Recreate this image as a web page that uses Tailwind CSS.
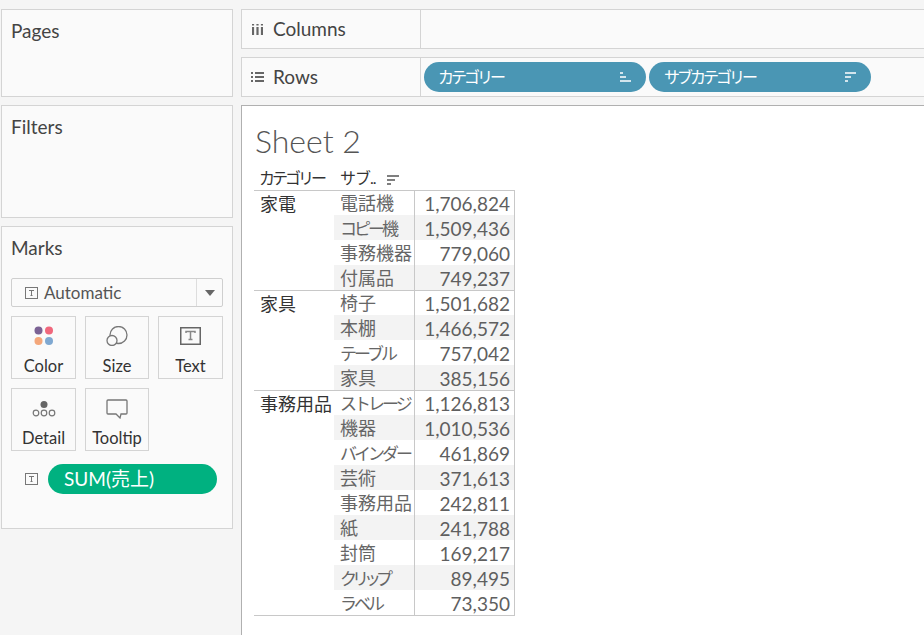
<!DOCTYPE html>
<html lang="en">
<head>
    <meta charset="UTF-8">
    <title>Sheet 2</title>
    <script src="https://cdn.jsdelivr.net/npm/@tailwindcss/browser@4"></script>
</head>
<body class="w-[924px] h-[635px] overflow-hidden bg-[#f5f5f5] font-['Lato','Noto_Sans_CJK_JP',sans-serif]">
<div class="flex h-[635px] pt-[9px] pl-[1px] gap-[8px]">

    <!-- left cards -->
    <div class="w-[232px] shrink-0 flex flex-col gap-[8px]">
        <div class="h-[88px] bg-[#fafafa] border border-[#d4d4d4] pl-[9px] pt-[9px] text-[19px] leading-[24px] text-[#444]">Pages</div>
        <div class="h-[113px] bg-[#fafafa] border border-[#d4d4d4] pl-[9px] pt-[9px] text-[19px] leading-[24px] text-[#444]">Filters</div>
        <div class="h-[303px] bg-[#fafafa] border border-[#d4d4d4] px-[9px] pt-[9px]">
            <div class="text-[19px] leading-[24px] text-[#444]">Marks</div>
            <div class="mt-[18px] w-[212px] h-[29px] flex bg-[#fafafa] border border-[#cfcfcf] rounded-[2px]">
                <div class="flex-1 flex items-center pl-[13px] gap-[6px] text-[17px] leading-[24px] text-[#555]">
                    <svg width="13" height="12" viewBox="0 0 13 12"><rect x="0.5" y="0.5" width="12" height="11" fill="none" stroke="#777"/><path d="M4 3.5h5M6.5 3.5v5M5.5 8.5h2" fill="none" stroke="#777"/></svg>
                    Automatic
                </div>
                <div class="w-[26px] border-l border-[#ddd] flex items-center justify-center">
                    <svg width="10" height="6" viewBox="0 0 10 6"><path d="M0 0h10L5 6z" fill="#666"/></svg>
                </div>
            </div>
            <div class="mt-[9px] grid grid-cols-[65px_64px_65px] gap-x-[9px] gap-y-[9px]">
                <div class="h-[63px] border border-[#d4d4d4] flex flex-col items-center pt-[9px] text-[16.5px] leading-[20px] text-[#333]">
                    <svg width="20" height="20" viewBox="0 0 20 20"><circle cx="4.5" cy="4.5" r="4" fill="#7b6294"/><circle cx="15" cy="4.5" r="4" fill="#f0677c"/><circle cx="4.5" cy="15" r="4" fill="#f4a77a"/><circle cx="15" cy="15" r="4" fill="#7fa8d1"/></svg>
                    <span class="mt-[10px]">Color</span>
                </div>
                <div class="h-[63px] border border-[#d4d4d4] flex flex-col items-center pt-[9px] text-[16.5px] leading-[20px] text-[#333]">
                    <svg width="22" height="20" viewBox="0 0 22 20"><circle cx="12.5" cy="9" r="8.5" fill="none" stroke="#777" stroke-width="1.3"/><circle cx="6" cy="14.5" r="5" fill="#fafafa" stroke="#777" stroke-width="1.3"/></svg>
                    <span class="mt-[10px]">Size</span>
                </div>
                <div class="h-[63px] border border-[#d4d4d4] flex flex-col items-center pt-[10px] text-[16.5px] leading-[20px] text-[#333]">
                    <svg width="21" height="18" viewBox="0 0 21 18"><rect x="0.75" y="0.75" width="19.5" height="16.5" fill="none" stroke="#666" stroke-width="1.5"/><path d="M6 6V4.5h9V6M10.5 4.5v8M8.5 12.5h4" fill="none" stroke="#888" stroke-width="1.5"/></svg>
                    <span class="mt-[11px]">Text</span>
                </div>
                <div class="h-[63px] border border-[#d4d4d4] flex flex-col items-center pt-[12px] text-[16.5px] leading-[20px] text-[#333]">
                    <svg width="24" height="16" viewBox="0 0 24 16"><circle cx="12" cy="3.5" r="3.5" fill="#666"/><circle cx="4" cy="12" r="2.8" fill="none" stroke="#777" stroke-width="1.2"/><circle cx="12" cy="12" r="2.8" fill="none" stroke="#777" stroke-width="1.2"/><circle cx="20" cy="12" r="2.8" fill="none" stroke="#777" stroke-width="1.2"/></svg>
                    <span class="mt-[11px]">Detail</span>
                </div>
                <div class="h-[63px] border border-[#d4d4d4] flex flex-col items-center pt-[10px] text-[16.5px] leading-[20px] text-[#333]">
                    <svg width="22" height="20" viewBox="0 0 22 20"><path d="M2 1h18a1 1 0 0 1 1 1v12a1 1 0 0 1-1 1h-5l-1 4-4-4H2a1 1 0 0 1-1-1V2a1 1 0 0 1 1-1z" fill="none" stroke="#777" stroke-width="1.3"/></svg>
                    <span class="mt-[9px]">Tooltip</span>
                </div>
            </div>
            <div class="mt-[13px] flex items-center pl-[14px] gap-[10px]">
                <svg width="13" height="12" viewBox="0 0 13 12"><rect x="0.5" y="0.5" width="12" height="11" fill="none" stroke="#777"/><path d="M4 3.5h5M6.5 3.5v5M5.5 8.5h2" fill="none" stroke="#777"/></svg>
                <div class="w-[169px] h-[30px] rounded-full bg-[#00b180] text-white text-[19px] leading-[30px] pl-[16px]">SUM(売上)</div>
            </div>
        </div>
    </div>

    <!-- right side -->
    <div class="flex-1 flex flex-col gap-[8px]">
        <div class="h-[40px] flex bg-[#fafafa] border-y border-l border-[#d4d4d4]">
            <div class="w-[179px] shrink-0 border-r border-[#d4d4d4] flex items-center pl-[10px] gap-[10px] text-[19px] text-[#444]">
                <svg width="11" height="11" viewBox="0 0 11 11"><path d="M1 0v1.500M1 3v8M5.500 0v1.500M5.500 3v8M10 0v1.500M10 3v8" fill="none" stroke="#666" stroke-width="2.200"/></svg>
                Columns
            </div>
        </div>
        <div class="h-[40px] flex bg-[#fafafa] border-y border-l border-[#d4d4d4]">
            <div class="w-[179px] shrink-0 border-r border-[#d4d4d4] flex items-center pl-[9px] gap-[9px] text-[19px] text-[#444]">
                <svg width="13" height="10" viewBox="0 0 13 10"><path d="M0 1h2M4 1h9M0 5h2M4 5h9M0 9h2M4 9h9" fill="none" stroke="#666" stroke-width="2"/></svg>
                Rows
            </div>
            <div class="flex items-center pl-[3px] gap-[3px]">
                <div class="w-[222px] h-[30px] rounded-full bg-[#4a96b4] text-white text-[16px] tracking-[-3px] flex items-center justify-between pl-[14px] pr-[15px]">
                    カテゴリー
                    <svg width="11" height="10" viewBox="0 0 11 10"><path d="M0 1h3M0 5h6M0 9h11" fill="none" stroke="#fff" stroke-width="1.6"/></svg>
                </div>
                <div class="w-[222px] h-[30px] rounded-full bg-[#4a96b4] text-white text-[16px] tracking-[-3px] flex items-center justify-between pl-[15px] pr-[15px]">
                    サブカテゴリー
                    <svg width="11" height="10" viewBox="0 0 11 10"><path d="M0 1h11M0 5h6M0 9h3" fill="none" stroke="#fff" stroke-width="1.6"/></svg>
                </div>
            </div>
        </div>

        <!-- view -->
        <div class="flex-1 bg-white border-l border-t border-[#b0b0b0] pl-[12px] pt-[16px]">
            <div class="text-[32px] leading-[38px] text-[#555] font-light pl-[1px]">Sheet 2</div>
            <div class="mt-[2px] h-[28px] pt-[4px] flex items-center text-[16px] text-[#333] whitespace-nowrap">
                <div class="w-[80px] pl-[5px] tracking-[-3px]">カテゴリー</div>
                <div class="pl-[6px] flex items-center gap-[11px]"><span class="tracking-[-1px]">サブ..</span>
                    <svg width="12" height="10" viewBox="0 0 12 10" class="mt-[4px]"><path d="M0 1h12M0 5h8M0 9h4" fill="none" stroke="#555" stroke-width="1.5"/></svg>
                </div>
            </div>
            <div id="viz" class="w-[261px]"></div>
        </div>
    </div>
</div>

<script>
    // kana is narrower in the reference than in Noto, so those labels carry their own tracking
    const kana = "text-[17px] tracking-[-3px]";
    const kanji = "text-[18px]";
    const groups = [
        ["家電", [["電話機", "1,706,824", kanji], ["コピー機", "1,509,436", kana], ["事務機器", "779,060", kanji], ["付属品", "749,237", kanji]]],
        ["家具", [["椅子", "1,501,682", kanji], ["本棚", "1,466,572", kanji], ["テーブル", "757,042", kana], ["家具", "385,156", kanji]]],
        ["事務用品", [["ストレージ", "1,126,813", kana], ["機器", "1,010,536", kanji], ["バインダー", "461,869", kana], ["芸術", "371,613", kanji], ["事務用品", "242,811", kanji], ["紙", "241,788", kanji], ["封筒", "169,217", kanji], ["クリップ", "89,495", "text-[17px] tracking-[-5px]"], ["ラベル", "73,350", kana]]]
    ];

    let html = "";
    groups.forEach(([category, rows]) => {
        html += `<div class="flex border-t border-[#c8c8c8]"><div class="w-[80px] shrink-0 pl-[6px] text-[18px] leading-[27px] text-[#333] whitespace-nowrap">${category}</div><div class="flex-1 -mt-px border-r border-[#c8c8c8]">`;
        rows.forEach((row, i) => {
            const stripe = i % 2 ? "bg-[#f3f3f3]" : "bg-transparent";
            html += `<div class="h-[25px] flex ${stripe}"><div class="w-[80px] pl-[6px] ${row[2]} leading-[27px] text-[#666] whitespace-nowrap overflow-hidden">${row[0]}</div><div class="flex-1 border-l border-[#c8c8c8] pr-[4px] text-right text-[19px] leading-[27px] text-[#5f5f5f]">${row[1]}</div></div>`;
        });
        html += `</div></div>`;
    });
    html += `<div class="border-t border-[#c8c8c8]"></div>`;
    document.getElementById("viz").innerHTML = html;
</script>
</body>
</html>
